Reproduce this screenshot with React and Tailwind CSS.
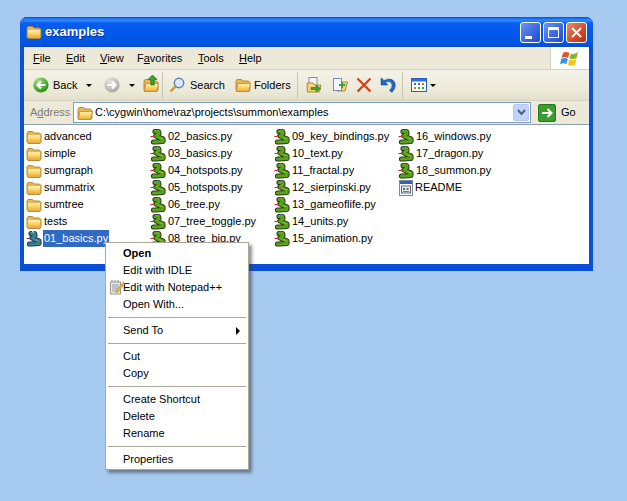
import React from "react";

const Folder = ({ open = false, className = "" }) => (
  <svg viewBox="0 0 16 16" className={`w-4 h-4 shrink-0 ${className}`}>
    <defs>
      <linearGradient id="folderFill" x1="0" y1="0" x2="0" y2="1">
        <stop offset="0" stopColor="#fff0b0" />
        <stop offset="0.5" stopColor="#fbd468" />
        <stop offset="1" stopColor="#eaa83a" />
      </linearGradient>
    </defs>
    <path d="M1 4 L2 2.5 H6.5 L8 4 H13.5 L15 5.5 V13 L14 14.5 H2 L1 13 Z" fill="#e8b850" stroke="#a9853a" strokeWidth="0.9" />
    {open ? (
      <path d="M3 6.5 H15.7 L13.6 14.5 H1.2 Z" fill="url(#folderFill)" stroke="#b08f3f" strokeWidth="0.8" />
    ) : (
      <rect x="2" y="6" width="12" height="7.5" rx="0.5" fill="url(#folderFill)" />
    )}
  </svg>
);

const Snake = ({ selected = false }) => {
  const body = selected ? "#3d7f8c" : "#5aa41c";
  const dark = selected ? "#17395a" : "#2f3a16";
  const light = selected ? "#6d9fb0" : "#93c22f";
  const line = "M5 3.5 H8.5 L9 5.5 L6 8 L9 9.5 L13 11 L13 13.5 L6 14 H3.5";
  return (
    <svg viewBox="0 0 17 17" className="w-[17px] h-[17px] shrink-0">
      <path d={line} fill="none" stroke={dark} strokeWidth="5.2" strokeLinejoin="round" strokeLinecap="round" />
      <path d={line} fill="none" stroke={body} strokeWidth="3.2" strokeLinejoin="round" strokeLinecap="round" />
      <path d="M5.5 2.5 H8.5 M9.5 9.5 L12.5 11" stroke={light} strokeWidth="1" />
      <rect x="6" y="1" width="2" height="1.4" fill={selected ? "#9fc4d6" : "#2b50b0"} />
      <path d="M0.5 8.5 H3 L4 7" fill="none" stroke={selected ? "#70384c" : "#d8201c"} strokeWidth="1" />
    </svg>
  );
};

const TextDoc = () => (
  <svg viewBox="0 0 16 16" className="w-4 h-4 shrink-0">
    <rect x="1.5" y="0.5" width="13" height="15" fill="#fff" stroke="#7d8797" />
    <rect x="2" y="1" width="12" height="3" fill="#2f5fc4" />
    <rect x="3.5" y="6" width="9" height="7" fill="#e4e8ef" stroke="#5f6878" />
    <path d="M5 8 H7 V10 H5 Z" fill="#2f7fd0" />
    <path d="M8.5 8 H10.5 V10 H8.5 Z" fill="#d04a2f" />
    <path d="M5 11.5 H11" stroke="#55a03a" />
  </svg>
);

const RoundNav = ({ disabled = false, id }) => (
  <svg viewBox="0 0 16 16" className="w-4 h-4 shrink-0">
    <defs>
      <radialGradient id={id} cx="0.35" cy="0.25" r="0.9">
        <stop offset="0" stopColor={disabled ? "#e2e2dc" : "#a8e080"} />
        <stop offset="0.6" stopColor={disabled ? "#bcbcb4" : "#45ab2c"} />
        <stop offset="1" stopColor={disabled ? "#9e9e96" : "#1f7c18"} />
      </radialGradient>
    </defs>
    <circle cx="8" cy="8" r="7.6" fill={`url(#${id})`} />
    <path d={disabled ? "M3.5 8 H11 M8 4.5 L11.5 8 L8 11.5" : "M12.5 8 H5 M8 4.5 L4.5 8 L8 11.5"} stroke="#fff" strokeWidth="2.2" fill="none" />
  </svg>
);

const Caret = ({ className = "" }) => (
  <span className={`w-0 h-0 border-x-[3px] border-t-[3px] border-x-transparent border-t-black ${className}`} />
);

const Divider = ({ className = "" }) => <div className={`w-px h-[27px] bg-[#c9c6b4] ${className}`} />;

const columns = [
  ["02_basics.py", "03_basics.py", "04_hotspots.py", "05_hotspots.py", "06_tree.py", "07_tree_toggle.py", "08_tree_big.py"],
  ["09_key_bindings.py", "10_text.py", "11_fractal.py", "12_sierpinski.py", "13_gameoflife.py", "14_units.py", "15_animation.py"],
  ["16_windows.py", "17_dragon.py", "18_summon.py"],
];

const folders = ["advanced", "simple", "sumgraph", "summatrix", "sumtree", "tests"];

const FileRow = ({ icon, children }) => (
  <div className="h-[17px] flex items-center">
    {icon}
    <span className="pl-px leading-[17px] whitespace-nowrap">{children}</span>
  </div>
);

const MenuItem = ({ label, bold, icon, arrow }) => (
  <div className={`relative h-[17px] pl-[15px] leading-[17px] ${bold ? "font-bold" : ""}`}>
    {icon && <span className="absolute left-[1px] top-0">{icon}</span>}
    {label}
    {arrow && <span className="absolute right-[6px] top-[5px] w-0 h-0 border-y-[4px] border-l-[4px] border-y-transparent border-l-black" />}
  </div>
);

const MenuSep = () => <div className="h-[9px] flex items-center"><div className="h-px w-full bg-[#aca899]" /></div>;

const NotepadIcon = () => (
  <svg viewBox="0 0 16 16" className="w-4 h-4">
    <rect x="1.5" y="3" width="10" height="12" fill="#e9e6da" stroke="#9d9a8e" />
    <path d="M3 6 H10 M3 8 H10 M3 10 H10 M3 12 H8" stroke="#8f9fb8" />
    <path d="M3 3 V1 M6 3 V1 M9 3 V1" stroke="#8a8a8a" />
    <path d="M14.5 3 L8 11 L7 13.5 L9.5 12.5 L15.5 5 Z" fill="#efc02b" stroke="#a8872a" strokeWidth="0.7" />
  </svg>
);

export default function App() {
  return (
    <div className="relative w-[627px] h-[501px] overflow-hidden bg-[#a6caf0] text-[11px] text-black font-['Liberation_Sans',sans-serif]">
      {/* explorer window */}
      <div className="absolute left-[20px] top-[17px] w-[573px] h-[254px] flex flex-col rounded-t-[7px] bg-[#0a4fd8] px-[4px] pb-[7px] overflow-hidden">
        <div className="-mx-[4px] h-[30px] shrink-0 flex items-center pl-[6px] pr-[6px] bg-[linear-gradient(180deg,#0a4be0_0%,#2f8bff_10%,#0a5cf0_22%,#0058e8_60%,#0255e2_90%,#0a48c8_100%)]">
          <Folder />
          <span className="ml-[3px] text-white font-bold text-[13px] [text-shadow:1px_1px_#0f2f9f]">examples</span>
          <div className="ml-auto flex gap-[2px]">
            <div className="relative w-[21px] h-[21px] rounded-[3px] border border-white bg-[linear-gradient(135deg,#6c94f0,#3a66de_60%,#2348c8)]">
              <div className="absolute left-[4px] bottom-[3px] w-[7px] h-[3px] bg-white" />
            </div>
            <div className="relative w-[21px] h-[21px] rounded-[3px] border border-white bg-[linear-gradient(135deg,#6c94f0,#3a66de_60%,#2348c8)]">
              <div className="absolute left-[4px] top-[4px] w-[11px] h-[11px] border border-white border-t-[3px]" />
            </div>
            <div className="w-[21px] h-[21px] rounded-[3px] border border-white bg-[linear-gradient(135deg,#ea8a6c,#d0492a_60%,#b53015)] flex items-center justify-center">
              <svg viewBox="0 0 11 11" className="w-[11px] h-[11px]">
                <path d="M1 1 L10 10 M10 1 L1 10" stroke="#fff" strokeWidth="2" />
              </svg>
            </div>
          </div>
        </div>

        {/* menu bar */}
        <div className="h-[23px] shrink-0 flex bg-[#ece9d8] border-b border-[#d5d2c2]">
          <div className="flex-1 flex items-center pl-[9px]">
            <span className="w-[33px]"><u>F</u>ile</span>
            <span className="w-[34px]"><u>E</u>dit</span>
            <span className="w-[37px]"><u>V</u>iew</span>
            <span className="w-[61px]">F<u>a</u>vorites</span>
            <span className="w-[41px]"><u>T</u>ools</span>
            <span><u>H</u>elp</span>
          </div>
          <div className="w-[39px] bg-white flex items-center justify-center border-l border-[#d5d2c2]">
            <svg viewBox="0 0 20 18" className="w-5 h-[18px]">
              <path d="M3 4 Q6 2 9.5 4 L8 9 Q5 7 1.5 9 Z" fill="#e2542a" />
              <path d="M11 4.5 Q14 6 18 3 L16.5 9 Q13 11 9.5 9.5 Z" fill="#7fba2a" />
              <path d="M1.2 10 Q5 8 7.8 10 L6.4 15 Q3 13.5 0 15.5 Z" fill="#3d8ee6" />
              <path d="M9.2 10.5 Q13 12 16.2 10 L15 16 Q11.5 17.5 8 16 Z" fill="#f6c21c" />
            </svg>
          </div>
        </div>

        {/* toolbar */}
        <div className="h-[31px] shrink-0 flex items-center pl-[9px] border-b border-[#d5d2c2] bg-[linear-gradient(180deg,#f4f2e8,#ece9d8_70%,#e3dfcb)]">
          <RoundNav id="navBack" />
          <span className="ml-[4px] w-[24px]">Back</span>
          <Caret className="ml-[9px]" />
          <div className="ml-[12px]"><RoundNav disabled id="navForward" /></div>
          <Caret className="ml-[9px] border-t-[#a9a79a]" />
          <div className="ml-[8px] relative">
            <Folder open />
            <svg viewBox="0 0 10 10" className="absolute left-[4px] -top-[2px] w-[11px] h-[11px]">
              <path d="M5 0 L9 4 H6.5 V9 H3.5 V4 H1 Z" fill="#3fa52c" stroke="#24701a" strokeWidth="0.7" />
            </svg>
          </div>
          <Divider className="ml-[3px]" />
          <svg viewBox="0 0 16 16" className="ml-[6px] w-4 h-4 shrink-0">
            <circle cx="10" cy="6" r="4.7" fill="#dbeaf8" stroke="#5a83b0" strokeWidth="1.4" />
            <path d="M6.5 9.5 L1.5 14.5" stroke="#c9973a" strokeWidth="2.4" />
          </svg>
          <span className="ml-[5px] w-[34px]">Search</span>
          <div className="ml-[11px]"><Folder open /></div>
          <span className="ml-[3px] w-[36px]">Folders</span>
          <Divider className="ml-[7px]" />
          <svg viewBox="0 0 16 16" className="ml-[8px] w-4 h-4 shrink-0">
            <rect x="3" y="0.5" width="8" height="10" fill="#f2f5fb" stroke="#7d8fb0" />
            <path d="M1 6 H7 L9 8 H15 L13.5 15 H1.5 Z" fill="#f9d270" stroke="#a8873a" />
            <path d="M5 10.5 H10 V8 L14.5 11.5 L10 15 V12.5 H5 Z" fill="#3fa52c" stroke="#24701a" strokeWidth="0.6" />
          </svg>
          <svg viewBox="0 0 16 16" className="ml-[10px] w-4 h-4 shrink-0">
            <path d="M9 5 H15.5 L13 14 H5 Z" fill="#f9d270" stroke="#a8873a" />
            <rect x="1.5" y="1.5" width="8" height="12" fill="#f2f5fb" stroke="#7d8fb0" />
            <path d="M7 8 H13 M10 5 V11" stroke="#3fa52c" strokeWidth="2" />
          </svg>
          <svg viewBox="0 0 16 16" className="ml-[8px] w-4 h-4 shrink-0">
            <path d="M1.5 1.5 L14.5 14.5 M14.5 1.5 L1.5 14.5" stroke="#e03a1c" strokeWidth="2.2" />
          </svg>
          <svg viewBox="0 0 16 16" className="ml-[8px] w-4 h-4 shrink-0">
            <path d="M1 1 V8 H8 L5.5 5.5 Q9 3.5 11.5 6 Q13.5 9 9.5 13.5 L12 15.5 Q16.5 10.5 15 6 Q12 -0.5 4 3.5 L1.5 1 Z" fill="#1e66c8" stroke="#124a9c" strokeWidth="0.5" />
          </svg>
          <Divider className="ml-[6px]" />
          <svg viewBox="0 0 16 16" className="ml-[8px] w-4 h-4 shrink-0">
            <rect x="0.5" y="1.5" width="15" height="13" fill="#fff" stroke="#2a5dbe" />
            <rect x="1" y="2" width="14" height="2.5" fill="#2f6fd8" />
            <path d="M3 6 H5 V8 H3 Z M7 6 H9 V8 H7 Z" fill="#2f6fd8" />
            <path d="M11 6 H13 V8 H11 Z M3 10 H5 V12 H3 Z" fill="#e2702a" />
            <path d="M7 10 H9 V12 H7 Z M11 10 H13 V12 H11 Z" fill="#3fa52c" />
          </svg>
          <Caret className="ml-[3px]" />
        </div>

        {/* address bar */}
        <div className="h-[24px] shrink-0 flex items-center pl-[6px] bg-[#ece9d8] border-b border-[#8c9db2]">
          <span className="w-[38px] text-[#7f7c73]">A<u>d</u>dress</span>
          <div className="ml-[5px] w-[458px] h-[21px] flex items-center bg-white border border-[#7f9db9] pl-[3px] pr-px">
            <Folder open />
            <span className="ml-[2px] whitespace-nowrap">C:\cygwin\home\raz\projects\summon\examples</span>
            <div className="ml-auto w-[16px] h-[17px] rounded-[2px] bg-[#c1d3fb] border border-[#b5c8f2] flex items-center justify-center">
              <svg viewBox="0 0 9 7" className="w-[9px] h-[7px]">
                <path d="M1 1 L4.5 5 L8 1" fill="none" stroke="#4d6185" strokeWidth="2" />
              </svg>
            </div>
          </div>
          <div className="ml-[7px] w-[18px] h-[18px] rounded-[2px] bg-[#3c9c30] border border-[#267a1c] flex items-center justify-center">
            <svg viewBox="0 0 12 12" className="w-3 h-3">
              <path d="M1 6 H10 M6.5 2 L10.5 6 L6.5 10" stroke="#fff" strokeWidth="2" fill="none" />
            </svg>
          </div>
          <span className="ml-[5px]">Go</span>
        </div>

        {/* file list */}
        <div className="flex-1 min-h-0 bg-white flex pt-[3px] pl-[2px] overflow-hidden">
          <div className="w-[124px] shrink-0">
            {folders.map((name) => (
              <FileRow key={name} icon={<Folder className="mr-px" />}>{name}</FileRow>
            ))}
            <div className="h-[17px] flex items-center">
              <Snake selected />
              <span className="bg-[#316ac5] text-white px-px leading-[17px]">01_basics.py</span>
            </div>
          </div>
          {columns.map((col, i) => (
            <div key={i} className="w-[124px] shrink-0">
              {col.map((name) => (
                <FileRow key={name} icon={<Snake />}>{name}</FileRow>
              ))}
              {i === 2 && <FileRow icon={<TextDoc />}>README</FileRow>}
            </div>
          ))}
        </div>
      </div>

      {/* context menu */}
      <div className="absolute left-[105px] top-[242px] w-[144px] bg-white border border-[#aca899] px-[2px] pt-[2px] pb-[1px] shadow-[3px_3px_3px_rgba(60,60,60,0.55)]">
        <MenuItem label="Open" bold />
        <MenuItem label="Edit with IDLE" />
        <MenuItem label="Edit with Notepad++" icon={<NotepadIcon />} />
        <MenuItem label="Open With..." />
        <MenuSep />
        <MenuItem label="Send To" arrow />
        <MenuSep />
        <MenuItem label="Cut" />
        <MenuItem label="Copy" />
        <MenuSep />
        <MenuItem label="Create Shortcut" />
        <MenuItem label="Delete" />
        <MenuItem label="Rename" />
        <MenuSep />
        <MenuItem label="Properties" />
      </div>
    </div>
  );
}
